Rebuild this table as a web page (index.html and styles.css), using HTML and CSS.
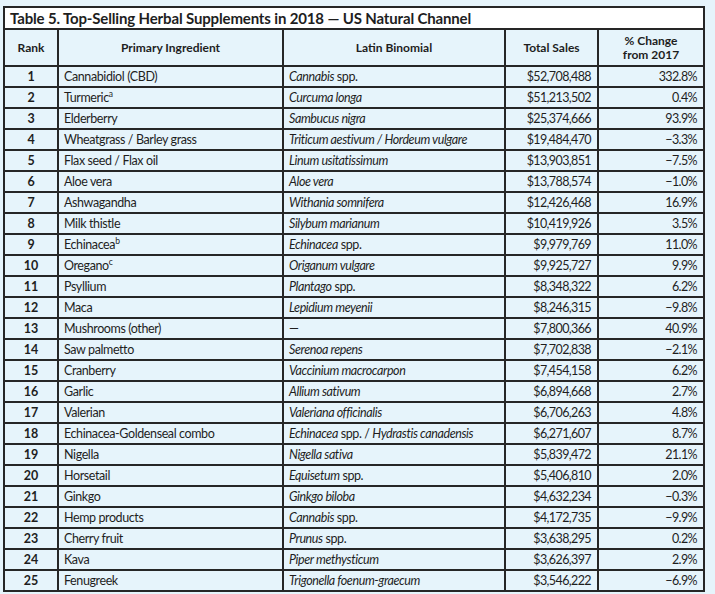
FILE: index.html
```html
<!DOCTYPE html>
<html>
<head>
<meta charset="utf-8">
<link rel="stylesheet" href="styles.css">
</head>
<body>
<table class="tbl">
  <colgroup>
    <col class="c-rank"><col class="c-ing"><col class="c-lat"><col class="c-sales"><col class="c-chg">
  </colgroup>
  <thead>
    <tr><th colspan="5" class="title">Table 5. Top-Selling Herbal Supplements in 2018 — US Natural Channel</th></tr>
    <tr class="head"><th>Rank</th><th>Primary Ingredient</th><th>Latin Binomial</th><th>Total Sales</th><th>% Change<br>from 2017</th></tr>
  </thead>
  <tbody>
    <tr><td class="rank">1</td><td>Cannabidiol (CBD)</td><td><i>Cannabis</i> spp.</td><td class="num">$52,708,488</td><td class="num">332.8%</td></tr>
    <tr><td class="rank">2</td><td>Turmeric<sup>a</sup></td><td><i>Curcuma longa</i></td><td class="num">$51,213,502</td><td class="num">0.4%</td></tr>
    <tr><td class="rank">3</td><td>Elderberry</td><td><i>Sambucus nigra</i></td><td class="num">$25,374,666</td><td class="num">93.9%</td></tr>
    <tr><td class="rank">4</td><td>Wheatgrass / Barley grass</td><td><i>Triticum aestivum / Hordeum vulgare</i></td><td class="num">$19,484,470</td><td class="num">−3.3%</td></tr>
    <tr><td class="rank">5</td><td>Flax seed / Flax oil</td><td><i>Linum usitatissimum</i></td><td class="num">$13,903,851</td><td class="num">−7.5%</td></tr>
    <tr><td class="rank">6</td><td>Aloe vera</td><td><i>Aloe vera</i></td><td class="num">$13,788,574</td><td class="num">−1.0%</td></tr>
    <tr><td class="rank">7</td><td>Ashwagandha</td><td><i>Withania somnifera</i></td><td class="num">$12,426,468</td><td class="num">16.9%</td></tr>
    <tr><td class="rank">8</td><td>Milk thistle</td><td><i>Silybum marianum</i></td><td class="num">$10,419,926</td><td class="num">3.5%</td></tr>
    <tr><td class="rank">9</td><td>Echinacea<sup>b</sup></td><td><i>Echinacea</i> spp.</td><td class="num">$9,979,769</td><td class="num">11.0%</td></tr>
    <tr><td class="rank">10</td><td>Oregano<sup>c</sup></td><td><i>Origanum vulgare</i></td><td class="num">$9,925,727</td><td class="num">9.9%</td></tr>
    <tr><td class="rank">11</td><td>Psyllium</td><td><i>Plantago</i> spp.</td><td class="num">$8,348,322</td><td class="num">6.2%</td></tr>
    <tr><td class="rank">12</td><td>Maca</td><td><i>Lepidium meyenii</i></td><td class="num">$8,246,315</td><td class="num">−9.8%</td></tr>
    <tr><td class="rank">13</td><td>Mushrooms (other)</td><td>—</td><td class="num">$7,800,366</td><td class="num">40.9%</td></tr>
    <tr><td class="rank">14</td><td>Saw palmetto</td><td><i>Serenoa repens</i></td><td class="num">$7,702,838</td><td class="num">−2.1%</td></tr>
    <tr><td class="rank">15</td><td>Cranberry</td><td><i>Vaccinium macrocarpon</i></td><td class="num">$7,454,158</td><td class="num">6.2%</td></tr>
    <tr><td class="rank">16</td><td>Garlic</td><td><i>Allium sativum</i></td><td class="num">$6,894,668</td><td class="num">2.7%</td></tr>
    <tr><td class="rank">17</td><td>Valerian</td><td><i>Valeriana officinalis</i></td><td class="num">$6,706,263</td><td class="num">4.8%</td></tr>
    <tr><td class="rank">18</td><td>Echinacea-Goldenseal combo</td><td><i>Echinacea</i> spp. / <i>Hydrastis canadensis</i></td><td class="num">$6,271,607</td><td class="num">8.7%</td></tr>
    <tr><td class="rank">19</td><td>Nigella</td><td><i>Nigella sativa</i></td><td class="num">$5,839,472</td><td class="num">21.1%</td></tr>
    <tr><td class="rank">20</td><td>Horsetail</td><td><i>Equisetum</i> spp.</td><td class="num">$5,406,810</td><td class="num">2.0%</td></tr>
    <tr><td class="rank">21</td><td>Ginkgo</td><td><i>Ginkgo biloba</i></td><td class="num">$4,632,234</td><td class="num">−0.3%</td></tr>
    <tr><td class="rank">22</td><td>Hemp products</td><td><i>Cannabis</i> spp.</td><td class="num">$4,172,735</td><td class="num">−9.9%</td></tr>
    <tr><td class="rank">23</td><td>Cherry fruit</td><td><i>Prunus</i> spp.</td><td class="num">$3,638,295</td><td class="num">0.2%</td></tr>
    <tr><td class="rank">24</td><td>Kava</td><td><i>Piper methysticum</i></td><td class="num">$3,626,397</td><td class="num">2.9%</td></tr>
    <tr><td class="rank">25</td><td>Fenugreek</td><td><i>Trigonella foenum-graecum</i></td><td class="num">$3,546,222</td><td class="num">−6.9%</td></tr>
  </tbody>
</table>
</body>
</html>
```
FILE: styles.css
```css
html, body {
  margin: 0;
  padding: 0;
  background: #e6f4fb;
}
body {
  padding: 6px 0 0 3px;
  font-family: Lato, "Open Sans", sans-serif;
  color: #1e1e1e;
}
.tbl {
  border-collapse: collapse;
  table-layout: fixed;
  width: 700px;
  background: #e6f4fb;
  font-size: 12.5px;
  letter-spacing: -0.4px;
}
.c-rank { width: 54px; }
.c-ing { width: 225px; }
.c-lat { width: 222px; }
.c-sales { width: 93px; }
.c-chg { width: 106px; }
.tbl th, .tbl td {
  border: 2px solid #262626;
  padding: 0 5px;
  white-space: nowrap;
}
.tbl .title {
  background: #ffffff;
  text-align: left;
  font-size: 15px;
  font-weight: 700;
  height: 20px;
  padding: 0 5px;
  letter-spacing: -0.15px;
}
.head th {
  height: 35px;
  font-size: 12px;
  font-weight: 700;
  line-height: 14px;
  text-align: center;
  letter-spacing: 0;
}
.tbl td {
  height: 19px;
  line-height: 19px;
}
.rank {
  text-align: center;
  font-weight: 700;
  letter-spacing: 0;
}
.num {
  text-align: right;
  letter-spacing: -0.6px;
}
.tbl td.num {
  padding-right: 6px;
}
sup {
  font-size: 8.5px;
  line-height: 0;
  vertical-align: 5px;
}
i {
  font-style: italic;
}
```
